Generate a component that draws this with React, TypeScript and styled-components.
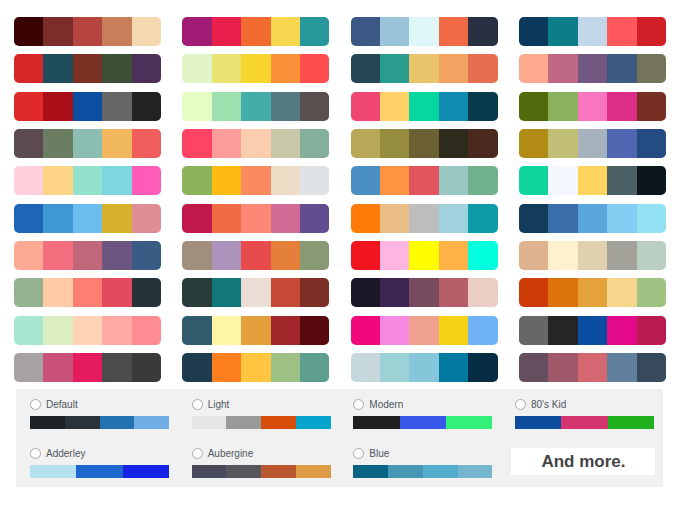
import React from "react";
import styled, { createGlobalStyle } from "styled-components";

const GlobalStyle = createGlobalStyle`
  html, body { margin: 0; padding: 0; background: #ffffff; }
  body { font-family: "Liberation Sans", Arial, sans-serif; }
`;

const columns: string[][][] = [
  [
    ["#3a0303", "#7b2c2b", "#b6453f", "#c87d5b", "#f4d8b0"],
    ["#d62828", "#1e4c5c", "#7a3023", "#3c4f37", "#4c3059"],
    ["#e02a2a", "#aa0f18", "#0c4ea1", "#666666", "#232323"],
    ["#5c4a51", "#6b7d62", "#8cbdb2", "#f1b75f", "#ef5d5c"],
    ["#ffd0dc", "#fed486", "#94e2ce", "#7dd7df", "#ff5cba"],
    ["#1d65b6", "#3f97d4", "#6cbcee", "#d8b12c", "#df8e97"],
    ["#fcaa94", "#f36f7f", "#c0677a", "#6c5580", "#385c84"],
    ["#94b28f", "#ffcba4", "#fe7e71", "#e4495e", "#253237"],
    ["#a8e6cf", "#dcedc1", "#ffd3b6", "#ffaaa5", "#ff8b94"],
    ["#a7a3a3", "#ca5179", "#e51b5e", "#4b4b4b", "#3a3a3a"],
  ],
  [
    ["#a01c75", "#e91f4c", "#f16a30", "#f8d750", "#26979a"],
    ["#e1f4c8", "#eae374", "#f9d62e", "#fc913a", "#ff4e50"],
    ["#e5fcc2", "#9de0ad", "#45ada8", "#547980", "#594f4f"],
    ["#fe4365", "#fc9d9a", "#f9cdad", "#c8c8a9", "#83af9b"],
    ["#8ab35b", "#fdbb14", "#fd8a5e", "#eeddc6", "#e0e3e5"],
    ["#c1174b", "#ee6b44", "#fd8878", "#d36b97", "#634d90"],
    ["#a28e7d", "#ab93bb", "#e84b4c", "#e47f39", "#879a73"],
    ["#283c3b", "#137779", "#e9ddd4", "#c74937", "#7b2e26"],
    ["#305c6d", "#fff6a6", "#e3a03c", "#a2272b", "#57090f"],
    ["#1f3b50", "#fe7f1f", "#fec541", "#9dc184", "#5d9e8e"],
  ],
  [
    ["#3c5986", "#9bc4da", "#e0f7f9", "#ef6a45", "#283041"],
    ["#264653", "#2a9d8f", "#e9c46a", "#f4a261", "#e76f51"],
    ["#ef476f", "#ffd166", "#06d6a0", "#118ab2", "#073b4c"],
    ["#b9a858", "#958c3e", "#6a6033", "#2d2b1c", "#4b291e"],
    ["#4b90c3", "#fe9341", "#e1545e", "#99c7c4", "#71b28d"],
    ["#ff7c0a", "#ebbe87", "#bdbdbd", "#a0d2dd", "#0d9ca5"],
    ["#f2151f", "#ffb5e2", "#fffd00", "#ffb346", "#01ffdd"],
    ["#1a1828", "#3d2551", "#784a5e", "#b65e6a", "#ebcdc5"],
    ["#f1087c", "#f589e1", "#efa18d", "#f4d214", "#6fb2f6"],
    ["#c6d8dc", "#9cd1d5", "#86c6db", "#02799e", "#062c44"],
  ],
  [
    ["#0b395d", "#0b7e8a", "#c2d8ea", "#fe585c", "#d01f26"],
    ["#feaa8f", "#bf6884", "#725880", "#3e5a81", "#737459"],
    ["#4f6b0b", "#8ab15c", "#f776bf", "#dc2e89", "#772f24"],
    ["#b28c15", "#c1be76", "#a7b3bc", "#5166b0", "#244c82"],
    ["#0ed59e", "#f5f7ff", "#fed45f", "#4b6166", "#0d161a"],
    ["#133b5b", "#396ea8", "#5aa5da", "#86cdf4", "#92e2f4"],
    ["#e0b390", "#fff1cd", "#e0d1ae", "#a3a29a", "#bbcec2"],
    ["#cd3b08", "#dd730c", "#e4a23c", "#f5d68c", "#9ec281"],
    ["#676767", "#252525", "#0b4ea1", "#e30b8c", "#b71b52"],
    ["#654f5e", "#a0596a", "#d56770", "#60809e", "#374a5b"],
  ],
];

const schemes: { name: string; colors: string[] }[] = [
  { name: "Default", colors: ["#1d2327", "#2c3338", "#2271b1", "#72aee6"] },
  { name: "Light", colors: ["#e5e5e5", "#999999", "#d64e07", "#04a4cc"] },
  { name: "Modern", colors: ["#1e1e1e", "#3858e9", "#33f078"] },
  { name: "80's Kid", colors: ["#0d4c9c", "#d5356f", "#1fb11d"] },
  { name: "Adderley", colors: ["#b5e1ee", "#1d66cd", "#1622e6"] },
  { name: "Aubergine", colors: ["#48495b", "#56575d", "#ba5731", "#dd9b46"] },
  { name: "Blue", colors: ["#096484", "#4796b3", "#52accc", "#74b6ce"] },
];

const Page = styled.div`
  width: 683px;
  height: 512px;
  box-sizing: border-box;
  padding: 17px 17px 0 14px;
  display: flex;
  flex-direction: column;
  gap: 7px;
`;

const PaletteGrid = styled.div`
  display: grid;
  grid-template-columns: repeat(4, 147px);
  column-gap: 21.33px;
`;

const PaletteColumn = styled.div`
  display: flex;
  flex-direction: column;
  gap: 8.33px;
`;

const Palette = styled.div`
  display: flex;
  height: 29px;
  border-radius: 5px;
  overflow: hidden;
`;

const Swatch = styled.div<{ $color: string }>`
  flex: 1;
  background: ${(p) => p.$color};
`;

const SchemePanel = styled.div`
  margin-left: 2px;
  width: 647px;
  box-sizing: border-box;
  background: #f1f1f1;
  padding: 9px 9px 9px 14px;
  display: grid;
  grid-template-columns: repeat(4, 139px);
  column-gap: 22.67px;
  row-gap: 18px;
`;

const SchemeOption = styled.div`
  display: flex;
  flex-direction: column;
  gap: 4px;
`;

const SchemeHeader = styled.div`
  display: flex;
  align-items: center;
  gap: 5px;
  height: 14px;
`;

const Radio = styled.span`
  width: 11px;
  height: 11px;
  box-sizing: border-box;
  border-radius: 50%;
  border: 1px solid #a7aaad;
  background: #ffffff;
  flex-shrink: 0;
`;

const SchemeLabel = styled.span`
  font-size: 10px;
  color: #50575e;
  line-height: 14px;
`;

const SchemeBar = styled.div`
  display: flex;
  height: 13px;
`;

const MoreBox = styled.div`
  margin: 1.5px -1px 3px -4px;
  background: #ffffff;
  display: flex;
  align-items: center;
  justify-content: center;
  font-size: 17px;
  font-weight: 700;
  color: #444444;
  padding-left: 1px;
`;

export default function App() {
  return (
    <>
      <GlobalStyle />
      <Page>
        <PaletteGrid>
          {columns.map((col, ci) => (
            <PaletteColumn key={ci}>
              {col.map((pal, pi) => (
                <Palette key={pi}>
                  {pal.map((c, si) => (
                    <Swatch key={si} $color={c} />
                  ))}
                </Palette>
              ))}
            </PaletteColumn>
          ))}
        </PaletteGrid>
        <SchemePanel>
          {schemes.map((s) => (
            <SchemeOption key={s.name}>
              <SchemeHeader>
                <Radio />
                <SchemeLabel>{s.name}</SchemeLabel>
              </SchemeHeader>
              <SchemeBar>
                {s.colors.map((c, i) => (
                  <Swatch key={i} $color={c} />
                ))}
              </SchemeBar>
            </SchemeOption>
          ))}
          <MoreBox>And more.</MoreBox>
        </SchemePanel>
      </Page>
    </>
  );
}
